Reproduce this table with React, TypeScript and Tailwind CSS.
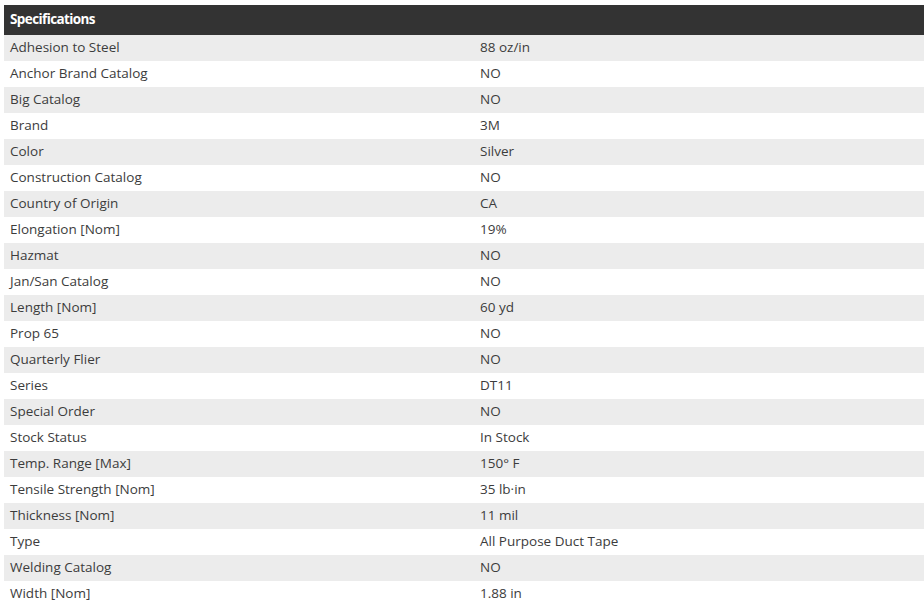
const specs: [string, string][] = [
  ['Adhesion to Steel', '88 oz/in'],
  ['Anchor Brand Catalog', 'NO'],
  ['Big Catalog', 'NO'],
  ['Brand', '3M'],
  ['Color', 'Silver'],
  ['Construction Catalog', 'NO'],
  ['Country of Origin', 'CA'],
  ['Elongation [Nom]', '19%'],
  ['Hazmat', 'NO'],
  ['Jan/San Catalog', 'NO'],
  ['Length [Nom]', '60 yd'],
  ['Prop 65', 'NO'],
  ['Quarterly Flier', 'NO'],
  ['Series', 'DT11'],
  ['Special Order', 'NO'],
  ['Stock Status', 'In Stock'],
  ['Temp. Range [Max]', '150° F'],
  ['Tensile Strength [Nom]', '35 lb·in'],
  ['Thickness [Nom]', '11 mil'],
  ['Type', 'All Purpose Duct Tape'],
  ['Welding Catalog', 'NO'],
  ['Width [Nom]', '1.88 in'],
]

export default function App() {
  return (
    <div className="min-h-screen bg-white pt-[5px] pl-[4px] font-['Open_Sans',sans-serif] text-[13.5px] text-[#3c3c3c]">
      {/* header */}
      <div className="flex h-[30px] items-center bg-[#333333] px-[6px] pb-[2px]">
        <span className="text-[13.5px] font-bold tracking-[-0.6px] text-white">Specifications</span>
      </div>
      {/* rows */}
      {specs.map(([label, value], i) => (
        <div
          key={label}
          className={`flex h-[26px] items-center pb-[2px] ${i % 2 === 0 ? 'bg-[#ececec]' : 'bg-white'}`}
        >
          <div className="w-[470px] pl-[6px]">{label}</div>
          <div className="flex-1 pl-[6px]">{value}</div>
        </div>
      ))}
    </div>
  )
}
